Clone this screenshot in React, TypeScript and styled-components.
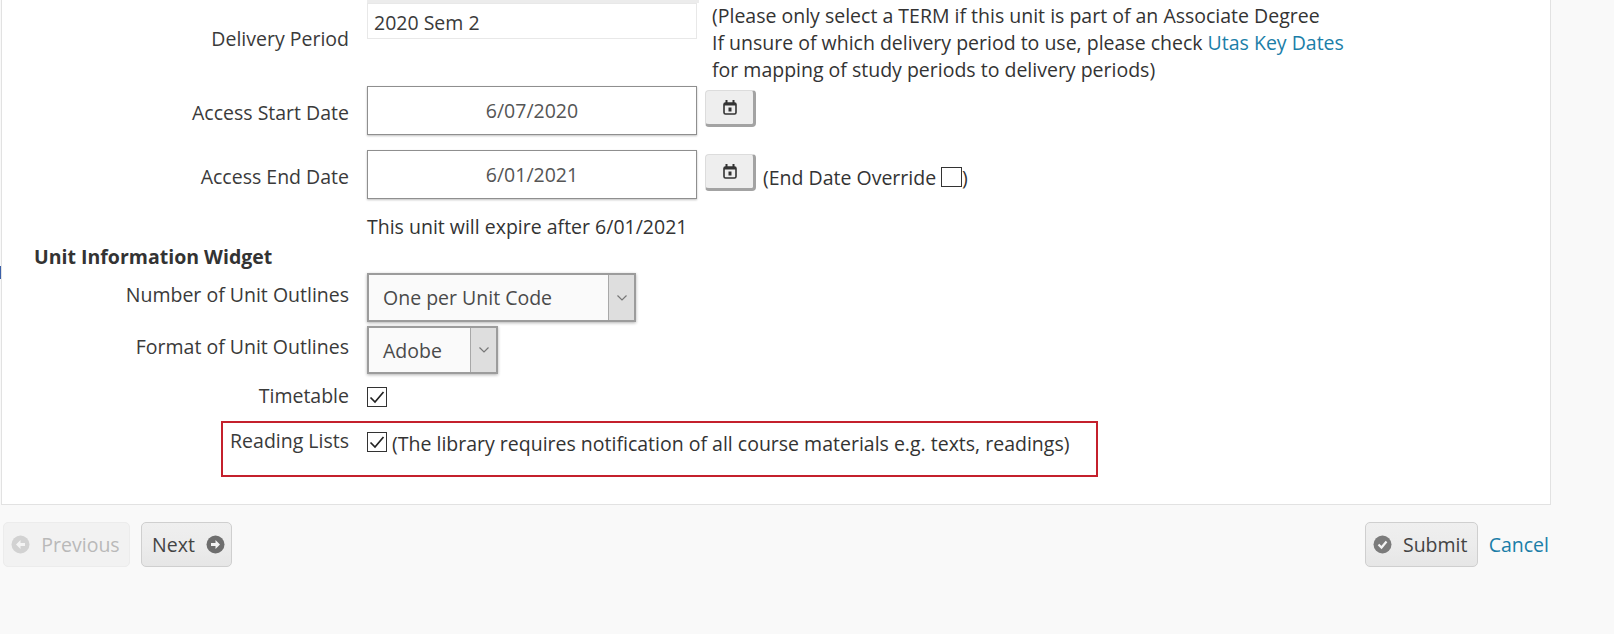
import React from 'react';
import styled, { createGlobalStyle } from 'styled-components';

const GlobalStyle = createGlobalStyle`
  html, body {
    margin: 0;
    padding: 0;
    height: 100%;
    overflow: hidden;
    background: #f9f9f9;
    font-family: 'Open Sans', sans-serif;
    font-size: 19.5px;
    color: #3a3a3a;
  }
`;

const Page = styled.div`
  position: relative;
  width: 1614px;
  height: 634px;
  overflow: hidden;
  background: #f9f9f9;
`;

const EdgeMark = styled.div`
  position: absolute;
  left: 0;
  top: 266px;
  width: 1px;
  height: 13px;
  background: #3a5fa8;
`;

const Panel = styled.div`
  margin-left: 1px;
  width: 1550px;
  height: 505px;
  box-sizing: border-box;
  background: #fff;
  border: 1px solid #e2e2e2;
  border-top: none;
`;

const TopRule = styled.div`
  margin-left: 365px;
  width: 332px;
  height: 3px;
  background: #ececec;
`;

const Row = styled.div<{ $height: number }>`
  display: grid;
  grid-template-columns: 347px 1fr;
  column-gap: 18px;
  height: ${(p) => p.$height}px;
`;

const Label = styled.div<{ $top: number }>`
  text-align: right;
  line-height: 26px;
  margin-top: ${(p) => p.$top}px;
  white-space: nowrap;
`;

const Field = styled.div`
  display: flex;
  align-items: flex-start;
`;

const TextInput = styled.div`
  width: 330px;
  height: 36px;
  box-sizing: border-box;
  border: 1px solid #e8e8e8;
  padding-left: 6px;
  line-height: 37px;
  color: #3a3a3a;
`;

const Note = styled.div`
  margin: -1px 0 0 15px;
  line-height: 27px;
  white-space: nowrap;
  color: #333;
`;

const NoteLink = styled.a`
  color: #1b7ea8;
  text-decoration: none;
`;

const DateInput = styled.div`
  width: 330px;
  height: 49px;
  box-sizing: border-box;
  border: 1px solid #8f8f8f;
  box-shadow: 0 1px 2px rgba(0, 0, 0, 0.25);
  text-align: center;
  line-height: 47px;
  color: #555;
`;

const CalendarButton = styled.div`
  display: flex;
  align-items: center;
  justify-content: center;
  margin: 4px 0 0 8px;
  width: 51px;
  height: 37px;
  box-sizing: border-box;
  background: #eeeeee;
  border: 1px solid #dcdcdc;
  border-right: 3px solid #a3a3a3;
  border-bottom: 3px solid #a3a3a3;
  border-radius: 4px;
`;

const Override = styled.div`
  display: flex;
  align-items: center;
  height: 28px;
  margin: 13px 0 0 7px;
  white-space: nowrap;
  color: #333;
`;

const OverrideBox = styled.span`
  display: inline-block;
  width: 21px;
  height: 20px;
  box-sizing: border-box;
  margin: 0 0 0 5px;
  border: 1px solid #333;
  background: #fff;
`;

const Plain = styled.div`
  line-height: 28px;
  color: #333;
  white-space: nowrap;
`;

const Heading = styled.div`
  height: 30px;
  padding-left: 32px;
  line-height: 28px;
  font-weight: 700;
  color: #333;
`;

const SelectBox = styled.div<{ $width: number; $height: number }>`
  display: flex;
  width: ${(p) => p.$width}px;
  height: ${(p) => p.$height}px;
  box-sizing: border-box;
  border: 2px solid #9c9c9c;
  box-shadow: 0 1px 3px rgba(0, 0, 0, 0.3);
  background: #fafafa;
`;

const SelectText = styled.div`
  flex: 1;
  padding-left: 14px;
  line-height: 46px;
  color: #4a4a4a;
  white-space: nowrap;
`;

const SelectArrow = styled.div`
  display: flex;
  align-items: center;
  justify-content: center;
  width: 25px;
  border-left: 1px solid #a8a8a8;
  background: #dedede;
`;

const CheckBox = styled.div`
  display: flex;
  align-items: center;
  justify-content: center;
  flex: none;
  width: 20px;
  height: 20px;
  box-sizing: border-box;
  border: 1px solid #333;
  background: #fff;
`;

const Highlight = styled.div`
  display: grid;
  grid-template-columns: 126px 1fr;
  column-gap: 18px;
  margin-left: 219px;
  width: 877px;
  height: 56px;
  box-sizing: border-box;
  border: 2px solid #c4202c;
`;

const ReadingField = styled.div`
  display: flex;
  align-items: flex-start;
  padding-top: 9px;
`;

const ReadingNote = styled.div`
  margin-left: 5px;
  line-height: 24px;
  white-space: nowrap;
  color: #333;
`;

const Footer = styled.div`
  display: flex;
  align-items: center;
  padding: 17px 65px 0 3px;
`;

const ActionButton = styled.div<{ $width: number; $disabled?: boolean; $nudge?: string }>`
  display: flex;
  align-items: center;
  justify-content: center;
  gap: 11px;
  width: ${(p) => p.$width}px;
  height: 45px;
  box-sizing: border-box;
  padding: ${(p) => p.$nudge || '0'};
  border-radius: 5px;
  border: 1px solid ${(p) => (p.$disabled ? '#ececec' : '#cfcfcf')};
  background: ${(p) =>
    p.$disabled ? '#f2f2f2' : 'linear-gradient(#efefef 0%, #ececec 50%, #e6e6e6 100%)'};
  color: ${(p) => (p.$disabled ? '#b9b9b9' : '#444')};
  white-space: nowrap;
`;

const NextSlot = styled.div`
  margin-left: 11px;
`;

const Spacer = styled.div`
  flex: 1;
`;

const CancelLink = styled.a`
  margin-left: 11px;
  color: #1b7ea8;
  text-decoration: none;
`;

const CalendarIcon = () => (
  <svg width="14" height="15" viewBox="0 0 14 15" fill="none">
    <path d="M3.5 0v3M10.5 0v3" stroke="#333" strokeWidth="2" />
    <rect x="1" y="3" width="12" height="11" rx="1.5" stroke="#333" strokeWidth="1.6" />
    <rect x="1" y="3" width="12" height="2.5" fill="#333" />
    <rect x="5.5" y="7.5" width="3" height="4" fill="#333" />
  </svg>
);

const ChevronIcon = () => (
  <svg width="12" height="8" viewBox="0 0 12 8" fill="none">
    <path d="M1.5 1.5L6 6l4.5-4.5" stroke="#777" strokeWidth="1.2" />
  </svg>
);

const TickIcon = () => (
  <svg width="18" height="16" viewBox="0 0 18 16" fill="none">
    <path d="M2.5 8.5L7 13L15.5 3" stroke="#222" strokeWidth="1.7" />
  </svg>
);

const ArrowIcon = ({ color, left }: { color: string; left?: boolean }) => (
  <svg width="19" height="19" viewBox="0 0 19 19">
    <circle cx="9.5" cy="9.5" r="9" fill={color} />
    <path
      d={left ? 'M5 9.5L9.5 5v3h4.5v3H9.5v3z' : 'M14 9.5L9.5 5v3H5v3h4.5v3z'}
      fill="#f4f4f4"
    />
  </svg>
);

const CheckCircleIcon = () => (
  <svg width="19" height="19" viewBox="0 0 19 19">
    <circle cx="9.5" cy="9.5" r="9" fill="#7b7b7b" />
    <path d="M5.5 9.5l3 3 5-6" fill="none" stroke="#f4f4f4" strokeWidth="2.2" />
  </svg>
);

const App = () => (
  <Page>
    <GlobalStyle />
    <EdgeMark />
    <Panel>
      <TopRule />
      <Row $height={83}>
        <Label $top={23}>Delivery Period</Label>
        <Field>
          <TextInput>2020 Sem 2</TextInput>
          <Note>
            (Please only select a TERM if this unit is part of an Associate Degree
            <br />
            If unsure of which delivery period to use, please check <NoteLink>Utas Key Dates</NoteLink>
            <br />
            for mapping of study periods to delivery periods)
          </Note>
        </Field>
      </Row>
      <Row $height={64}>
        <Label $top={14}>Access Start Date</Label>
        <Field>
          <DateInput>6/07/2020</DateInput>
          <CalendarButton>
            <CalendarIcon />
          </CalendarButton>
        </Field>
      </Row>
      <Row $height={63}>
        <Label $top={14}>Access End Date</Label>
        <Field>
          <DateInput>6/01/2021</DateInput>
          <CalendarButton>
            <CalendarIcon />
          </CalendarButton>
          <Override>
            (End Date Override
            <OverrideBox />)
          </Override>
        </Field>
      </Row>
      <Row $height={30}>
        <div />
        <Plain>This unit will expire after 6/01/2021</Plain>
      </Row>
      <Heading>Unit Information Widget</Heading>
      <Row $height={53}>
        <Label $top={9}>Number of Unit Outlines</Label>
        <Field>
          <SelectBox $width={269} $height={49}>
            <SelectText>One per Unit Code</SelectText>
            <SelectArrow>
              <ChevronIcon />
            </SelectArrow>
          </SelectBox>
        </Field>
      </Row>
      <Row $height={61}>
        <Label $top={8}>Format of Unit Outlines</Label>
        <Field>
          <SelectBox $width={131} $height={48}>
            <SelectText>Adobe</SelectText>
            <SelectArrow>
              <ChevronIcon />
            </SelectArrow>
          </SelectBox>
        </Field>
      </Row>
      <Row $height={34}>
        <Label $top={-4}>Timetable</Label>
        <Field>
          <CheckBox>
            <TickIcon />
          </CheckBox>
        </Field>
      </Row>
      <Highlight>
        <Label $top={5}>Reading Lists</Label>
        <ReadingField>
          <CheckBox>
            <TickIcon />
          </CheckBox>
          <ReadingNote>(The library requires notification of all course materials e.g. texts, readings)</ReadingNote>
        </ReadingField>
      </Highlight>
    </Panel>
    <Footer>
      <ActionButton $width={127} $disabled $nudge="0 2px 0 0">
        <ArrowIcon color="#d2d2d2" left />
        Previous
      </ActionButton>
      <NextSlot>
        <ActionButton $width={91} $nudge="0 0 0 4px">
          Next
          <ArrowIcon color="#6e6e6e" />
        </ActionButton>
      </NextSlot>
      <Spacer />
      <ActionButton $width={113} $nudge="0 2px 0 0">
        <CheckCircleIcon />
        Submit
      </ActionButton>
      <CancelLink>Cancel</CancelLink>
    </Footer>
  </Page>
);

export default App;
